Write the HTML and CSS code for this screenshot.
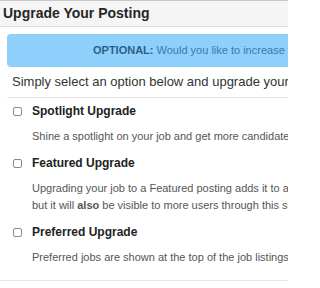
FILE: index.html
```html
<!DOCTYPE html>
<html>
<head>
<meta charset="utf-8">
<link rel="stylesheet" href="styles.css">
</head>
<body>
<div class="page">
  <div class="panel-heading">Upgrade Your Posting</div>
  <div class="panel-body">
    <div class="alert"><strong>OPTIONAL:</strong> Would you like to increase the visibility of your job posting?</div>
    <p class="intro">Simply select an option below and upgrade your job posting today.</p>
    <div class="options">
      <div class="option">
        <label class="option-label"><input type="checkbox" class="cb"><span>Spotlight Upgrade</span></label>
        <p class="desc">Shine a spotlight on your job and get more candidates to apply.</p>
      </div>
      <div class="option">
        <label class="option-label"><input type="checkbox" class="cb"><span>Featured Upgrade</span></label>
        <p class="desc">Upgrading your job to a Featured posting adds it to a special section,<br>but it will <b>also</b> be visible to more users through this section.</p>
      </div>
      <div class="option">
        <label class="option-label"><input type="checkbox" class="cb"><span>Preferred Upgrade</span></label>
        <p class="desc">Preferred jobs are shown at the top of the job listings.</p>
      </div>
    </div>
  </div>
  <div class="panel-footer"></div>
</div>
</body>
</html>
```
FILE: styles.css
```css
html, body {
  margin: 0;
  padding: 0;
  background: #fff;
}
.page {
  width: 288px;
  height: 288px;
  overflow: hidden;
  white-space: nowrap;
  font-family: "Liberation Sans", Arial, sans-serif;
  color: #333;
  border-top: 1px solid #c8c8c8;
  box-sizing: border-box;
}
.panel-heading {
  height: 25px;
  line-height: 25px;
  padding-left: 3px;
  background: #f5f5f5;
  border-bottom: 1px solid #dddddd;
  font-weight: bold;
  font-size: 14px;
  color: #262626;
}
.panel-body {
  padding: 7px 0 0 7px;
  width: 600px;
}
.alert {
  background: #8ecffb;
  border-radius: 4px;
  height: 33px;
  line-height: 33px;
  padding-left: 86px;
  font-size: 11px;
  color: #3a7bab;
}
.alert strong {
  color: #2a5f86;
}
.intro {
  margin: 0;
  padding: 6px 0 6px 5px;
  font-size: 13px;
  line-height: 18px;
  color: #333;
  border-bottom: 1px solid #e6e6e6;
}
.options {
  padding: 5px 0 0 5px;
}
.option + .option {
  margin-top: 10px;
}
.option-label {
  display: flex;
  align-items: center;
  gap: 10px;
  height: 16px;
  font-weight: bold;
  font-size: 12px;
  color: #222;
}
.cb {
  appearance: none;
  -webkit-appearance: none;
  margin: 0 0 0 1px;
  width: 9px;
  height: 9px;
  border: 1px solid #8a8a8a;
  border-radius: 2px;
  background: #fff;
  box-sizing: border-box;
}
.desc {
  margin: 9px 0 0 20px;
  font-size: 11px;
  line-height: 17px;
  color: #555;
}
.panel-footer {
  margin-top: 14px;
  border-top: 1px solid #e6e6e6;
}
```
